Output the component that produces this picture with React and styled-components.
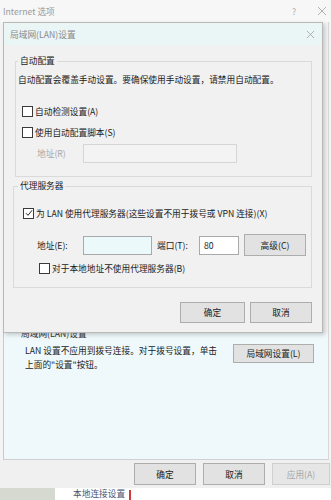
import React from "react";
import styled, { createGlobalStyle } from "styled-components";

const Global = createGlobalStyle`
  html, body {
    margin: 0;
    padding: 0;
    background: #ffffff;
  }
  body {
    font-family: "Noto Sans CJK SC", "Noto Sans", "Liberation Sans", sans-serif;
    font-size: 8.7px;
    color: #1a1a1a;
  }
`;

const Page = styled.div`
  width: 331px;
  height: 500px;
  overflow: hidden;
  display: flex;
  flex-direction: column;
  background: #f4f4f4;
`;

const OuterTitle = styled.div`
  height: 22px;
  display: flex;
  align-items: center;
  padding: 0 0 0 3px;
  color: #9a9a9a;
  font-size: 8.7px;
  background: #f7f7f7;
  .caption {
    flex: 1;
  }
  .help {
    width: 30px;
    text-align: center;
    color: #b0b0b0;
    margin-right: 4px;
  }
  .close {
    width: 18px;
    display: flex;
    justify-content: center;
  }
`;

const Middle = styled.div`
  display: flex;
`;

const Dialog = styled.div`
  width: 318px;
  height: 309px;
  margin-left: 3px;
  border: 1px solid #b9b9b9;
  box-shadow: 2px 2px 4px rgba(0, 0, 0, 0.18);
  background: #f1f1f1;
  display: flex;
  flex-direction: column;
  position: relative;
  z-index: 2;
`;

const OuterRight = styled.div`
  flex: 1;
  background: #f3f3f3;
  border-right: 1px solid #d8d8d8;
  margin-right: 2px;
`;

const DialogTitle = styled.div`
  height: 22px;
  display: flex;
  align-items: center;
  padding-left: 6px;
  background: #eaf5f6;
  color: #8a8a8a;
  .caption {
    flex: 1;
  }
  .close {
    width: 24px;
    display: flex;
    justify-content: center;
  }
`;

const Body = styled.div`
  flex: 1;
  display: flex;
  flex-direction: column;
  padding: 0 10px 0 9px;
  overflow: hidden;
`;

const Group = styled.div`
  border: 1px solid #dadada;
  margin-left: ${(p) => p.$indent || 0}px;
  height: ${(p) => p.$h}px;
  position: relative;
  display: flex;
  flex-direction: column;
  margin-top: ${(p) => p.$top || 0}px;
  flex: none;
`;

const Legend = styled.div`
  position: absolute;
  top: -7px;
  left: ${(p) => p.$left || 3}px;
  padding: 0 2px;
  background: #f1f1f1;
  line-height: 12px;
`;

const Line = styled.div`
  height: ${(p) => p.$h}px;
  flex: none;
  display: flex;
  align-items: center;
  padding-left: ${(p) => p.$pl || 0}px;
  white-space: nowrap;
`;

const Box = styled.span`
  width: 9px;
  height: 9px;
  border: 1px solid #3a3a3a;
  background: #ffffff;
  display: inline-flex;
  align-items: center;
  justify-content: center;
  margin-right: 2px;
  flex: none;
`;

const Field = styled.div`
  width: ${(p) => p.$w}px;
  height: 19px;
  border: 1px solid ${(p) => (p.$disabled ? "#d6d6d6" : "#a9a9a9")};
  background: ${(p) => p.$bg || "#ffffff"};
  display: flex;
  align-items: center;
  padding-left: 4px;
  box-sizing: border-box;
  flex: none;
`;

const Label = styled.span`
  width: ${(p) => p.$w}px;
  padding-left: ${(p) => p.$pl || 0}px;
  flex: none;
  color: ${(p) => (p.$muted ? "#a8a8a8" : "inherit")};
`;

const Spacer = styled.span`
  width: ${(p) => p.$w}px;
  flex: none;
`;

const Button = styled.button`
  width: ${(p) => p.$w || 63}px;
  height: ${(p) => p.$h || 21}px;
  border: 1px solid ${(p) => (p.$disabled ? "#cfcfcf" : "#adadad")};
  background: ${(p) => (p.$disabled ? "#e6e6e6" : "#e2e2e2")};
  color: ${(p) => (p.$disabled ? "#a6a6a6" : "#1a1a1a")};
  font-family: inherit;
  font-size: 8.7px;
  padding: 0;
  flex: none;
`;

const ButtonRow = styled.div`
  display: flex;
  justify-content: flex-end;
  gap: ${(p) => p.$gap || 5}px;
  padding: ${(p) => p.$pad};
  height: ${(p) => p.$h}px;
  box-sizing: border-box;
  align-items: center;
  flex: none;
`;

const Content = styled.div`
  height: 126px;
  margin: 0 2px 0 3px;
  background: #eff9fb;
  border-left: 1px solid #c9c9c9;
  border-right: 1px solid #d8d8d8;
  border-bottom: 1px solid #d0d0d0;
  overflow: hidden;
  display: flex;
  flex-direction: column;
  padding: 0 14px 0 21px;
`;

const Clipped = styled.div`
  margin-top: -5px;
  line-height: 12px;
  color: #333;
  margin-left: -4px;
`;

const LanRow = styled.div`
  display: flex;
  justify-content: space-between;
  margin-top: 4px;
  .text {
    line-height: 14px;
    width: 200px;
  }
`;

const Footer = styled.div`
  height: 28px;
  background: #f0f0f0;
`;

const Under = styled.div`
  flex: 1;
  display: flex;
  background: #ffffff;
  .side {
    width: 55px;
    background: #d5d9d0;
  }
  .txt {
    margin-left: 18px;
    color: #4a5470;
    font-size: 8.7px;
    line-height: 12px;
  }
  .mark {
    display: inline-block;
    width: 2px;
    height: 10px;
    background: #d43838;
    margin-left: 4px;
    vertical-align: bottom;
  }
`;

const Cross = ({ size = 9, color = "#9a9a9a" }) => (
  <svg width={size} height={size} viewBox="0 0 10 10">
    <path d="M1 1 L9 9 M9 1 L1 9" stroke={color} strokeWidth="0.9" fill="none" />
  </svg>
);

const Check = ({ checked }) => (
  <Box>
    {checked && (
      <svg width="8" height="8" viewBox="0 0 8 8">
        <path d="M1 4.2 L3 6.3 L7 1.3" stroke="#222" strokeWidth="1" fill="none" />
      </svg>
    )}
  </Box>
);

export default function App() {
  return (
    <Page>
      <Global />
      <OuterTitle>
        <span className="caption">Internet 选项</span>
        <span className="help">?</span>
        <span className="close">
          <Cross size={10} color="#a8a8a8" />
        </span>
      </OuterTitle>

      <Middle>
        <Dialog>
          <DialogTitle>
            <span className="caption">局域网(LAN)设置</span>
            <span className="close">
              <Cross size={9} color="#a0a0a0" />
            </span>
          </DialogTitle>

          <Body>
            <Group $h={114} $indent={2} $top={16}>
              <Legend $left={2}>自动配置</Legend>
              <Line $h={10} />
              <Line $h={14} $pl={2}>
                自动配置会覆盖手动设置。要确保使用手动设置，请禁用自动配置。
              </Line>
              <Line $h={15} />
              <Line $h={21} $pl={6}>
                <Check />
                自动检测设置(A)
              </Line>
              <Line $h={21} $pl={6}>
                <Check />
                使用自动配置脚本(S)
              </Line>
              <Line $h={21} $pl={21}>
                <Label $w={46} $muted>
                  地址(R)
                </Label>
                <Field $w={154} $bg="#f3f3f3" $disabled />
              </Line>
            </Group>

            <Group $h={100} $top={9}>
              <Legend $left={4}>代理服务器</Legend>
              <Line $h={16} />
              <Line $h={20} $pl={9}>
                <Check checked />为 LAN 使用代理服务器(这些设置不用于拨号或 VPN 连接)(X)
              </Line>
              <Line $h={11} />
              <Line $h={22} $pl={23}>
                <Label $w={46}>地址(E):</Label>
                <Field $w={69} $bg="#ebf9fb" />
                <Label $w={42} $pl={5}>
                  端口(T):
                </Label>
                <Field $w={40}>80</Field>
                <Spacer $w={5} />
                <Button $w={62} $h={22}>
                  高级(C)
                </Button>
              </Line>
              <Line $h={24} $pl={25}>
                <Check />
                对于本地地址不使用代理服务器(B)
              </Line>
            </Group>

            <ButtonRow $h={44} $pad="4px 0 0 0" $gap={5}>
              <Button $w={65} $h={21}>
                确定
              </Button>
              <Button $w={62} $h={21}>
                取消
              </Button>
            </ButtonRow>
          </Body>
        </Dialog>
        <OuterRight />
      </Middle>

      <Content>
        <Clipped>局域网(LAN)设置</Clipped>
        <LanRow>
          <span className="text">
            LAN 设置不应用到拨号连接。对于拨号设置，单击上面的"设置"按钮。
          </span>
          <Button $w={81} $h={19}>
            局域网设置(L)
          </Button>
        </LanRow>
      </Content>

      <Footer>
        <ButtonRow $h={28} $pad="0 1px 0 0" $gap={7}>
          <Button $w={62} $h={22}>
            确定
          </Button>
          <Button $w={62} $h={22}>
            取消
          </Button>
          <Button $w={58} $h={22} $disabled>
            应用(A)
          </Button>
        </ButtonRow>
      </Footer>

      <Under>
        <div className="side" />
        <div className="txt">
          本地连接设置<span className="mark" />
        </div>
      </Under>
    </Page>
  );
}
